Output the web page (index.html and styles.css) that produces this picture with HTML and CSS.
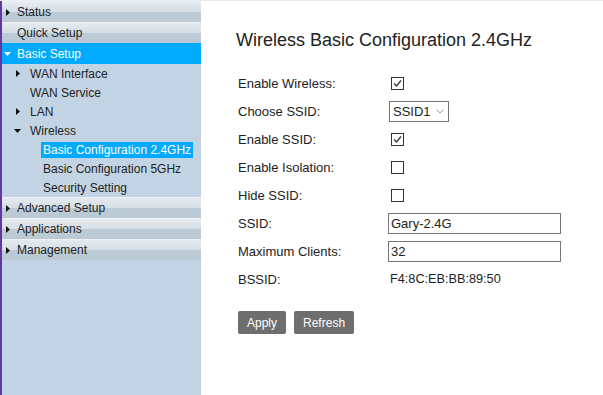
FILE: index.html
```html
<!DOCTYPE html>
<html lang="en">
<head>
    <meta charset="UTF-8">
    <title>Wireless Basic Configuration 2.4GHz</title>
    <link rel="stylesheet" href="styles.css">
</head>
<body>
    <div class="page">
        <aside class="sidebar">
            <div class="menu-top"><svg class="tri-right" width="4" height="7" viewBox="0 0 4 7"><polygon points="0,0 4,3.5 0,7"/></svg>Status</div>
            <div class="menu-top plain">Quick Setup</div>
            <div class="menu-top open"><svg class="tri-down" width="7" height="4" viewBox="0 0 7 4"><polygon points="0,0 7,0 3.5,4"/></svg>Basic Setup</div>

            <div class="menu-sub"><svg class="tri-right" width="4" height="7" viewBox="0 0 4 7"><polygon points="0,0 4,3.5 0,7"/></svg>WAN Interface</div>
            <div class="menu-sub plain">WAN Service</div>
            <div class="menu-sub"><svg class="tri-right" width="4" height="7" viewBox="0 0 4 7"><polygon points="0,0 4,3.5 0,7"/></svg>LAN</div>
            <div class="menu-sub open"><svg class="tri-down" width="7" height="4" viewBox="0 0 7 4"><polygon points="0,0 7,0 3.5,4"/></svg>Wireless</div>
            <div class="menu-leaf"><span class="leaf-label active">Basic Configuration 2.4GHz</span></div>
            <div class="menu-leaf"><span class="leaf-label">Basic Configuration 5GHz</span></div>
            <div class="menu-leaf"><span class="leaf-label">Security Setting</span></div>

            <div class="menu-top"><svg class="tri-right" width="4" height="7" viewBox="0 0 4 7"><polygon points="0,0 4,3.5 0,7"/></svg>Advanced Setup</div>
            <div class="menu-top"><svg class="tri-right" width="4" height="7" viewBox="0 0 4 7"><polygon points="0,0 4,3.5 0,7"/></svg>Applications</div>
            <div class="menu-top"><svg class="tri-right" width="4" height="7" viewBox="0 0 4 7"><polygon points="0,0 4,3.5 0,7"/></svg>Management</div>
        </aside>

        <main class="content">
            <h1>Wireless Basic Configuration 2.4GHz</h1>

            <div class="form-grid">
                <label>Enable Wireless:</label>
                <span class="check on"><svg width="11" height="11" viewBox="0 0 11 11"><polyline points="2,5.5 4.5,8 9,2.5"/></svg></span>

                <label>Choose SSID:</label>
                <span class="select-wrap">
                    <select class="select">
                        <option>SSID1</option>
                    </select>
                    <svg class="chevron" width="8" height="5" viewBox="0 0 8 5"><polyline points="0.5,0.5 4,4 7.5,0.5"/></svg>
                </span>

                <label>Enable SSID:</label>
                <span class="check on"><svg width="11" height="11" viewBox="0 0 11 11"><polyline points="2,5.5 4.5,8 9,2.5"/></svg></span>

                <label>Enable Isolation:</label>
                <span class="check"></span>

                <label>Hide SSID:</label>
                <span class="check"></span>

                <label>SSID:</label>
                <input class="text-input" type="text" value="Gary-2.4G">

                <label>Maximum Clients:</label>
                <input class="text-input" type="text" value="32">

                <label>BSSID:</label>
                <span class="value">F4:8C:EB:BB:89:50</span>
            </div>

            <div class="actions">
                <button class="btn">Apply</button>
                <button class="btn">Refresh</button>
            </div>
        </main>
    </div>
</body>
</html>
```

FILE: styles.css
```css
body {
    margin: 0;
    font-family: "Liberation Sans", Arial, sans-serif;
    color: #222;
    background: #fff;
}

.page {
    display: flex;
    height: 100vh;
    box-sizing: border-box;
    border-top: 1px solid #e6ecf1;
}

/* left menu */
.sidebar {
    width: 199px;
    flex-shrink: 0;
    border-left: 2px solid #6236a8;
    background: #c2d4e4;
    font-size: 12px;
}

.sidebar svg {
    display: inline-block;
    fill: #111;
}

.menu-top {
    display: flex;
    align-items: center;
    height: 20px;
    border-top: 1px solid #eef2f5;
    padding-left: 4px;
    background: linear-gradient(to bottom, #e4eaef 0%, #d5dfe6 48%, #bdcbd6 52%, #bac9d4 100%);
}

.menu-top .tri-right {
    margin-right: 7px;
}

.menu-top.plain {
    padding-left: 15px;
}

.menu-top.open {
    padding-left: 2px;
    background: #00aaff;
    border-top-color: #00aaff;
    color: #fff;
}

.menu-top.open svg {
    fill: #fff;
    margin-right: 6px;
}

.menu-sub {
    display: flex;
    align-items: center;
    height: 19px;
    padding-left: 14px;
}

.menu-sub .tri-right {
    margin-right: 10px;
}

.menu-sub.plain {
    padding-left: 28px;
}

.menu-sub.open {
    padding-left: 12px;
}

.menu-sub.open svg {
    margin-right: 9px;
}

.menu-leaf {
    display: flex;
    align-items: center;
    height: 19px;
    padding-left: 39px;
}

.leaf-label {
    display: inline-block;
    line-height: 16px;
    padding: 0 2px;
}

.leaf-label.active {
    background: #00aaff;
    color: #fff;
}

/* main area */
.content {
    flex: 1;
    padding: 0 0 0 35px;
}

h1 {
    margin: 29px 0 0;
    font-size: 18px;
    font-weight: normal;
    line-height: 21px;
    color: #222;
}

.form-grid {
    display: grid;
    grid-template-columns: 152px auto;
    grid-auto-rows: 28px;
    align-items: center;
    justify-items: start;
    margin: 18px 0 0 2px;
    font-size: 13px;
}

.check {
    display: inline-flex;
    align-items: center;
    justify-content: center;
    width: 11px;
    height: 11px;
    margin-left: 1px;
    border: 1px solid #333;
    background: #fff;
}

.check svg {
    fill: none;
    stroke: #333;
    stroke-width: 1.3;
}

.select-wrap {
    position: relative;
    display: inline-block;
}

.select {
    appearance: none;
    -webkit-appearance: none;
    width: 60px;
    height: 21px;
    margin: 0 0 0 -1px;
    padding: 0 0 0 3px;
    border: 1px solid #767676;
    border-radius: 0;
    background: #fff;
    font-family: inherit;
    font-size: 13px;
    color: #222;
}

.chevron {
    position: absolute;
    right: 5px;
    top: 8px;
    fill: none;
    stroke: #999;
    stroke-width: 1;
}

.text-input {
    box-sizing: border-box;
    width: 173px;
    height: 21px;
    margin-left: -2px;
    padding: 0 2px;
    border: 1px solid #767676;
    font-family: inherit;
    font-size: 13px;
    color: #222;
}

.value {
    font-size: 12.7px;
}

.actions {
    display: flex;
    gap: 8px;
    margin: 18px 0 0 2px;
}

.btn {
    height: 23px;
    padding: 0 9px;
    border: none;
    border-radius: 2px;
    background: #6e6e6e;
    color: #fff;
    font-family: inherit;
    font-size: 12px;
}
```
